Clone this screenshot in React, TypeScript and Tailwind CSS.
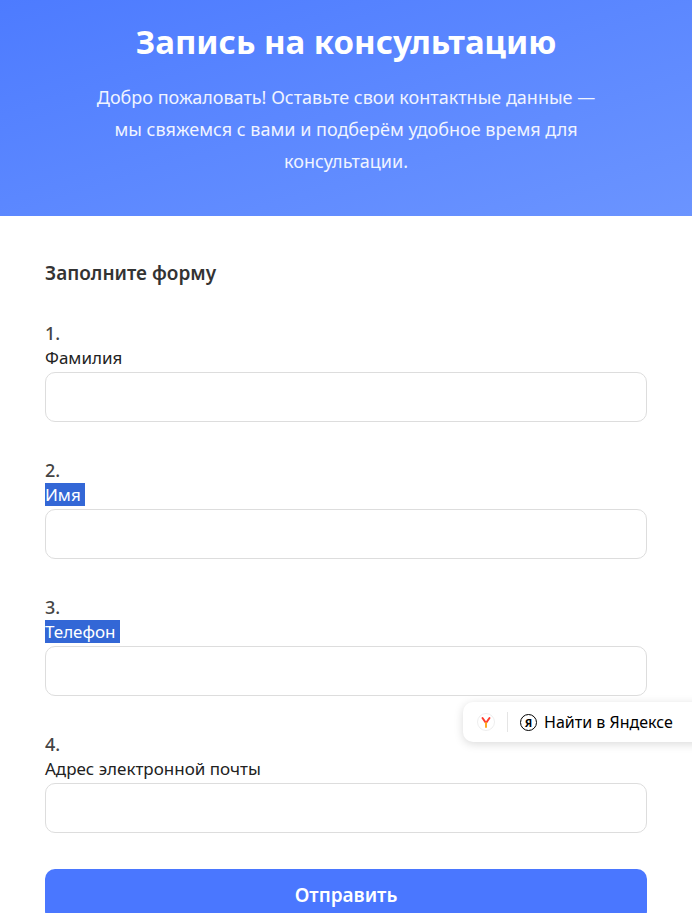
export default function App() {
  const fields = [
    { n: "1.", l: "Фамилия", sel: false },
    { n: "2.", l: "Имя", sel: true },
    { n: "3.", l: "Телефон", sel: true },
    { n: "4.", l: "Адрес электронной почты", sel: false },
  ];
  return (
    <div className="relative w-[692px] h-[913px] overflow-hidden bg-white" style={{ fontFamily: '"Noto Sans", "Open Sans", sans-serif' }}>
      <div className="h-[216px] bg-gradient-to-br from-[#4d7bff] to-[#6b94ff] flex flex-col items-center pt-[18px] text-white">
        <h1 className="text-[33px] font-bold leading-[48px]">Запись на консультацию</h1>
        <p className="mt-[15px] w-[515px] text-center text-[18px] leading-[32px] text-[#f0f4ff]">
          Добро пожаловать! Оставьте свои контактные данные — мы свяжемся с вами и подберём удобное время для консультации.
        </p>
      </div>
      <div className="px-[45px] pt-[43px]">
        <h2 className="text-[19px] font-semibold text-[#333] leading-[28px]">Заполните форму</h2>
        <div className="mt-[33px] flex flex-col gap-[35px]">
          {fields.map((f) => (
            <div key={f.n} className="flex flex-col">
              <div className="text-[18px] font-medium text-[#444] leading-[26px]">{f.n}</div>
              <div className="leading-[24px]">
                <span className={"text-[17px] " + (f.sel ? "bg-[#3367d6] text-white" : "text-[#222]")}>{f.l}{f.sel ? "\u00a0" : ""}</span>
              </div>
              <div className="mt-[2px] h-[50px] rounded-[10px] border border-[#ddd] bg-white" />
            </div>
          ))}
        </div>
        <button className="mt-[36px] w-full h-[52px] rounded-[10px] bg-[#4a77ff] text-white text-[19px] font-semibold">Отправить</button>
      </div>
      <div className="absolute left-[463px] top-[702px] w-[240px] h-[40px] bg-white rounded-l-[10px] shadow-[0_2px_10px_rgba(0,0,0,0.15)] flex items-center px-[14px] gap-[12px]">
        <svg width="18" height="18" viewBox="0 0 18 18">
          <circle cx="9" cy="9" r="8.5" fill="#fff" stroke="#eee" />
          <path d="M5.5 5 L9 10 L12.5 5" stroke="#ff3d2e" strokeWidth="2" fill="none" strokeLinecap="round" />
          <path d="M9 10 V14" stroke="#ffaa22" strokeWidth="2" strokeLinecap="round" />
        </svg>
        <div className="w-px h-[20px] bg-[#e5e5e5]" />
        <div className="flex items-center gap-[7px] text-[16px] text-black">
          <span className="w-[17px] h-[17px] rounded-full border-[1.5px] border-black flex items-center justify-center text-[11px] font-bold leading-none">Я</span>
          <span>Найти в Яндексе</span>
        </div>
      </div>
    </div>
  );
}
